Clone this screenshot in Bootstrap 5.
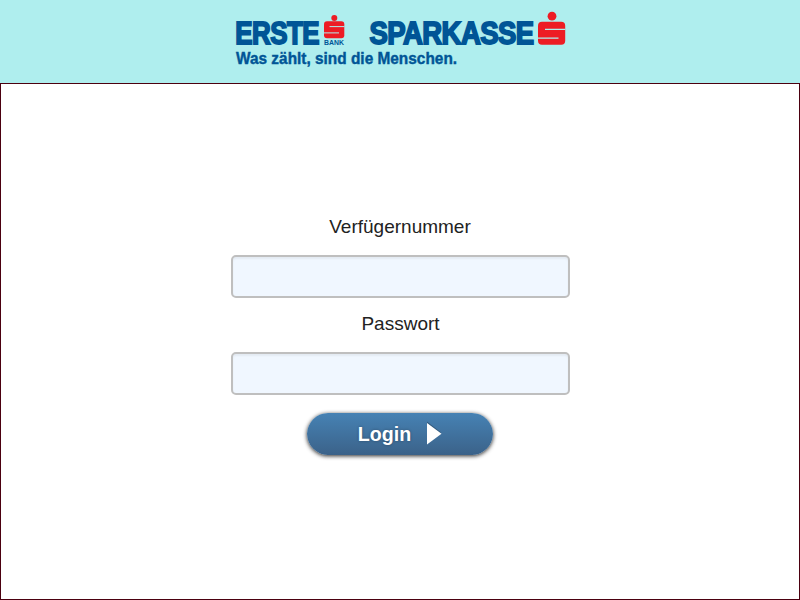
<!DOCTYPE html>
<html lang="de">
<head>
<meta charset="utf-8">
<meta name="viewport" content="width=device-width, initial-scale=1">
<title>Login</title>
<link href="https://cdn.jsdelivr.net/npm/bootstrap@5.3.0/dist/css/bootstrap.min.css" rel="stylesheet">
<style>
body { font-family: "Liberation Sans", Arial, sans-serif; color: #222; }
.brand-bar { height: 83px; background: #afeeee; }
.brand-logo { width: 340px; height: 70px; margin-left: 4px; }
.brand-logo text { font-family: "Liberation Sans", Arial, sans-serif; font-weight: 700; fill: #005596; }
.wordmark { font-size: 30.5px; letter-spacing: -.6px; }
.login-panel { border: 1px solid #4b000f; padding-top: 132px; }
.login-form { width: 339px; margin-left: 1px; }
.login-label { font-size: 19px; line-height: 22px; margin: 0 1px 17px 0; }
.login-label + .login-field + .login-label { margin-right: 0; }
.login-field { height: 43px; border: 2px solid #bfbfbf; border-radius: 5px; background: #f0f7ff; box-shadow: inset 0 2px 2px rgba(0,0,0,.05); margin-bottom: 15px; }
.login-field:focus { background: #f0f7ff; }
.login-btn { width: 186px; height: 42px; margin: 3px 1px 0 0; padding: 0; border: 0; border-radius: 21px; background: linear-gradient(#4682b4, #3b6289); box-shadow: 0 1px 4px rgba(0,0,0,.85); font-size: 19.6px; text-shadow: 0 0 3px rgba(0,0,0,.3); }
.login-btn, .login-btn:hover { color: #fff; }
.login-caption { line-height: 20px; }
</style>
</head>
<body class="vh-100 overflow-hidden d-flex flex-column bg-white">
<header class="brand-bar d-flex justify-content-center">
  <svg class="brand-logo" viewBox="232 0 340 70" role="img" aria-label="Erste Bank Sparkasse">
    <g stroke="#005596" stroke-width="1.8">
      <text class="wordmark" transform="translate(235.2 44.3) scale(.85 1)">ERSTE</text>
      <text class="wordmark" transform="translate(369.4 44.3) scale(.902 1)">SPARKASSE</text>
    </g>
    <text transform="translate(324 45) scale(.96 1)" font-size="7.2">BANK</text>
    <text transform="translate(236 64.4) scale(.957 1)" font-size="16.1" stroke="#005596" stroke-width=".4">Was zählt, sind die Menschen.</text>
    <g fill="#ed1c24">
      <circle cx="334.3" cy="18" r="3"/>
      <rect x="324" y="21.3" width="20.3" height="17" rx="3"/>
      <circle cx="552" cy="16.2" r="4.4"/>
      <rect x="538" y="21.7" width="27.2" height="23" rx="4"/>
    </g>
    <path d="M329.5 26.6H344.5M324 32.9H339" stroke="#afeeee"/>
    <path d="M545 29.3H565.3M538 38.2H558.5" stroke="#afeeee" stroke-width="1.3"/>
  </svg>
</header>
<main class="login-panel flex-grow-1 d-flex flex-column align-items-center">
  <form class="login-form d-flex flex-column align-items-center">
    <label class="login-label" for="user">Verfügernummer</label>
    <input class="login-field form-control" id="user" type="text">
    <label class="login-label" for="pass">Passwort</label>
    <input class="login-field form-control" id="pass" type="password">
    <button class="login-btn btn fw-bold d-flex align-items-center justify-content-center" type="button">
      <span class="login-caption">Login</span>
      <svg class="ms-3" width="15" height="22" viewBox="0 0 15 22" overflow="visible" aria-hidden="true">
        <path d="M0-1.5 14 9.5 0 20z" fill="#000" opacity=".25"/>
        <path d="M0 0 14.5 10.8 0 21.5z" fill="#fff"/>
      </svg>
    </button>
  </form>
</main>
<script src="https://cdn.jsdelivr.net/npm/bootstrap@5.3.0/dist/js/bootstrap.bundle.min.js"></script>
</body>
</html>
